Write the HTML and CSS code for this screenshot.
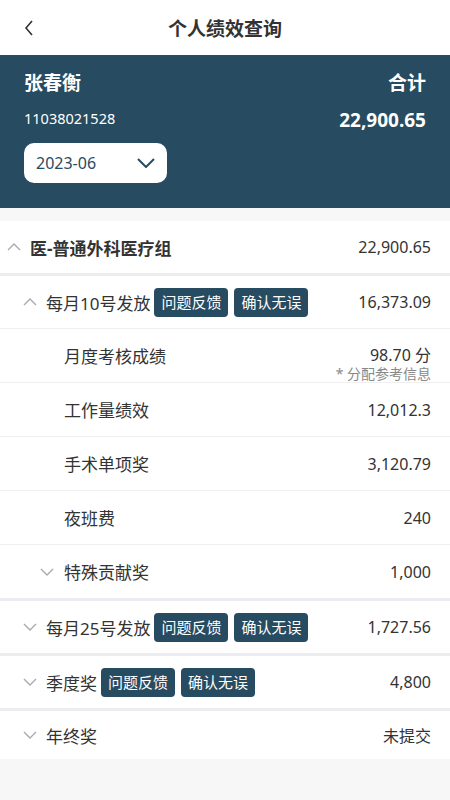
FILE: index.html
```html
<!DOCTYPE html>
<html lang="zh-CN">
<head>
<meta charset="UTF-8">
<title>个人绩效查询</title>
<link rel="stylesheet" href="styles.css">
</head>
<body>

<div class="nav">
  <svg class="back" width="12" height="18" viewBox="0 0 12 18"><polyline points="9,2 3,9 9,16" fill="none" stroke="#333" stroke-width="1.6"/></svg>
  <span class="nav-title">个人绩效查询</span>
</div>

<div class="header">
  <div class="h-row">
    <span class="name">张春衡</span>
    <span class="sum-label">合计</span>
  </div>
  <div class="h-row h-row2">
    <span class="code">11038021528</span>
    <span class="sum">22,900.65</span>
  </div>
  <div class="month">
    <span>2023-06</span>
    <svg width="18" height="10" viewBox="0 0 18 10"><polyline points="1,1 9,9 17,1" fill="none" stroke="#274b60" stroke-width="2"/></svg>
  </div>
</div>

<div class="lista">
  <div class="row grupo sec">
    <svg class="arr" width="14" height="8" viewBox="0 0 14 8"><polyline points="1,7 7,1 13,7" fill="none" stroke="#aaa" stroke-width="1.4"/></svg>
    <span class="nome">医-普通外科医疗组</span>
    <span class="valor">22,900.65</span>
  </div>

  <div class="row n1">
    <svg class="arr" width="14" height="8" viewBox="0 0 14 8"><polyline points="1,7 7,1 13,7" fill="none" stroke="#aaa" stroke-width="1.4"/></svg>
    <span class="nome">每月10号发放</span>
    <span class="tag">问题反馈</span>
    <span class="tag">确认无误</span>
    <span class="valor">16,373.09</span>
  </div>

  <div class="row n2">
    <span class="nome">月度考核成绩</span>
    <div class="valor-col">
      <span class="valor">98.70 分</span>
      <span class="nota">* 分配参考信息</span>
    </div>
  </div>
  <div class="row n2">
    <span class="nome">工作量绩效</span>
    <span class="valor">12,012.3</span>
  </div>
  <div class="row n2">
    <span class="nome">手术单项奖</span>
    <span class="valor">3,120.79</span>
  </div>
  <div class="row n2">
    <span class="nome">夜班费</span>
    <span class="valor">240</span>
  </div>
  <div class="row n2 com-seta sec">
    <svg class="arr" width="14" height="8" viewBox="0 0 14 8"><polyline points="1,1 7,7 13,1" fill="none" stroke="#aaa" stroke-width="1.4"/></svg>
    <span class="nome">特殊贡献奖</span>
    <span class="valor">1,000</span>
  </div>

  <div class="row n1 sec">
    <svg class="arr" width="14" height="8" viewBox="0 0 14 8"><polyline points="1,1 7,7 13,1" fill="none" stroke="#aaa" stroke-width="1.4"/></svg>
    <span class="nome">每月25号发放</span>
    <span class="tag">问题反馈</span>
    <span class="tag">确认无误</span>
    <span class="valor">1,727.56</span>
  </div>

  <div class="row n1 sec">
    <svg class="arr" width="14" height="8" viewBox="0 0 14 8"><polyline points="1,1 7,7 13,1" fill="none" stroke="#aaa" stroke-width="1.4"/></svg>
    <span class="nome">季度奖</span>
    <span class="tag">问题反馈</span>
    <span class="tag">确认无误</span>
    <span class="valor">4,800</span>
  </div>

  <div class="row n1 ultimo">
    <svg class="arr" width="14" height="8" viewBox="0 0 14 8"><polyline points="1,1 7,7 13,1" fill="none" stroke="#aaa" stroke-width="1.4"/></svg>
    <span class="nome">年终奖</span>
    <span class="valor">未提交</span>
  </div>
</div>

</body>
</html>
```

FILE: styles.css
```css
body {
  margin: 0;
  font-family: "Noto Sans", "Noto Sans CJK SC", sans-serif;
  background: #f7f7f7;
  color: #333;
}

.nav {
  height: 55px;
  background: #fff;
  display: flex;
  align-items: center;
  justify-content: center;
  position: relative;
}
.back {
  position: absolute;
  left: 23px;
  top: 19px;
}
.nav-title {
  font-size: 19px;
  font-weight: bold;
  color: #333;
}

.header {
  background: #274b60;
  color: #fff;
  padding: 13px 24px 25px;
  margin-bottom: 13px;
}
.h-row {
  display: flex;
  justify-content: space-between;
  align-items: center;
  height: 28px;
}
.h-row2 {
  height: 24px;
  margin-top: 10px;
}
.name, .sum-label {
  font-size: 19px;
  font-weight: bold;
}
.code {
  font-size: 14.5px;
}
.sum {
  font-size: 19px;
  font-weight: bold;
  padding-top: 3px;
}
.month {
  margin-top: 13px;
  width: 143px;
  height: 40px;
  box-sizing: border-box;
  background: #fff;
  border-radius: 10px;
  color: #274b60;
  font-size: 16px;
  display: flex;
  align-items: center;
  justify-content: space-between;
  padding: 0 12px 0 12px;
}

.lista {
  background: #fff;
}
.row {
  display: flex;
  align-items: center;
  height: 52px;
  padding-right: 19px;
  border-bottom: 1px solid #efeff2;
  font-size: 16px;
}
.row.sec {
  border-bottom: 3px solid #ededf1;
}
.row.ultimo {
  border-bottom: none;
  height: 48px;
}
.nome {
  font-size: 17px;
}
.arr {
  flex: none;
  margin-right: 9px;
}
.grupo {
  padding-left: 7px;
}
.grupo .nome {
  font-weight: bold;
}
.n1 {
  padding-left: 23px;
}
.n2 {
  padding-left: 64px;
  height: 53px;
}
.n2.com-seta {
  padding-left: 40px;
}
.n2.com-seta .arr {
  margin-right: 10px;
}
.tag {
  background: #274b60;
  color: #fff;
  font-size: 15px;
  height: 29px;
  line-height: 29px;
  padding: 0 7px;
  border-radius: 4px;
  margin-left: 6px;
}
.nome + .tag {
  margin-left: 4px;
}
.valor {
  margin-left: auto;
}
.valor-col {
  margin-left: auto;
  align-self: flex-start;
  margin-top: 15px;
  display: flex;
  flex-direction: column;
  align-items: flex-end;
}
.valor-col .valor {
  line-height: 22px;
}
.nota {
  font-size: 14px;
  line-height: 16px;
  color: #888;
}
```
